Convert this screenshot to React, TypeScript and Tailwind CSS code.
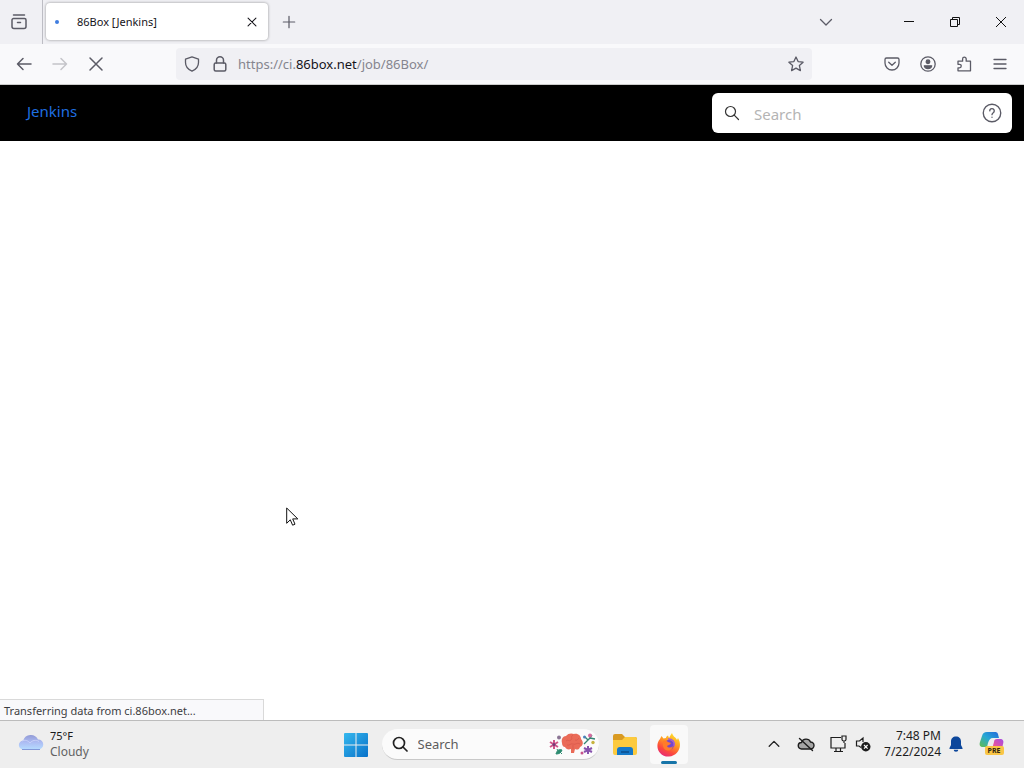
import React, { useState } from 'react';

interface IconButtonProps {
    label: string;
    className?: string;
    disabled?: boolean;
    children: React.ReactNode;
}

const IconButton: React.FC<IconButtonProps> = ({ label, className = 'w-9 h-8', disabled, children }) => (
    <button
        type="button"
        aria-label={label}
        disabled={disabled}
        className={`flex shrink-0 items-center justify-center text-[#5b5b66] disabled:text-[#c4c4c9] ${className}`}
    >
        {children}
    </button>
);

interface IconProps {
    size?: number;
    width?: number;
    className?: string;
    children: React.ReactNode;
}

// Stroke icons on a 16 unit grid
const Icon: React.FC<IconProps> = ({ size = 16, width = 1.3, className = '', children }) => (
    <svg
        width={size}
        height={size}
        viewBox="0 0 16 16"
        fill="none"
        stroke="currentColor"
        strokeWidth={width}
        strokeLinecap="round"
        strokeLinejoin="round"
        className={`shrink-0 ${className}`}
        aria-hidden="true"
    >
        {children}
    </svg>
);

const TabStrip: React.FC = () => (
    <header className="flex h-11 shrink-0 items-stretch bg-[#f0f0f4]">
        <IconButton label="Firefox View" className="w-[43px] border-r border-[#bdbdc4] pr-1">
            <Icon width={1.5}>
                <path d="M2.500 1h11" />
                <path d="M2.500 4.500h11a1.500 1.500 0 0 1 1.500 1.500v6.500a2 2 0 0 1-2 2H3a2 2 0 0 1-2-2V6a1.500 1.500 0 0 1 1.500-1.500z" />
                <path d="M6.500 8.500h3" />
            </Icon>
        </IconButton>

        <div className="mt-[3px] mb-1 ml-[3px] flex w-[222px] items-center rounded bg-white px-2 shadow-[0_0_3px_rgba(0,0,0,0.4)]">
            <span className="ml-px h-1 w-1 rounded-full bg-[#3f7de0]"></span>
            <span className="ml-[18px] flex-1 pt-px text-[11px] text-[#15141a]">86Box [Jenkins]</span>
            <IconButton label="Close tab" className="h-4 w-4 text-[#15141a]">
                <Icon size={14} width={1.2}><path d="M3.500 3.500l9 9M12.500 3.500l-9 9" /></Icon>
            </IconButton>
        </div>

        <IconButton label="New tab" className="w-[42px]">
            <Icon size={14} width={1.4}><path d="M8 1.500v13M1.500 8h13" /></Icon>
        </IconButton>

        <div className="flex-1"></div>

        <IconButton label="List all tabs" className="mr-10 w-10">
            <Icon><path d="M2.500 5.500L8 11l5.500-5.500" /></Icon>
        </IconButton>
        <IconButton label="Minimize" className="w-[46px]">
            <svg width="10" height="10" viewBox="0 0 10 10" stroke="#111" aria-hidden="true"><path d="M0 4.500h10" /></svg>
        </IconButton>
        <IconButton label="Restore" className="w-[46px]">
            <svg width="10" height="10" viewBox="0 0 10 10" fill="none" stroke="#111" aria-hidden="true">
                <path d="M.500 2.500h7v7h-7zM2.500 2.500v-2h7v7h-2" />
            </svg>
        </IconButton>
        <IconButton label="Close" className="w-[46px]">
            <svg width="12" height="12" viewBox="0 0 12 12" stroke="#111" aria-hidden="true"><path d="M1 1l10 10M11 1L1 11" /></svg>
        </IconButton>
    </header>
);

const AddressBar: React.FC = () => {
    const [editing, setEditing] = useState(false);
    const [url, setUrl] = useState('https://ci.86box.net/job/86Box/');

    return (
        <div className="mx-[62px] flex h-8 flex-1 items-center rounded bg-[#f0f0f4] text-[#5b5b66]">
            <Icon className="ml-2">
                <path d="M8 .800l6.500 2.300v3.400c0 4-2.500 7-6.500 8.700C4 13.500 1.500 10.500 1.500 6.500V3.100z" />
            </Icon>
            <Icon className="ml-3" width={1.5}>
                <rect x="2.200" y="7" width="11.600" height="8" rx="1.500" />
                <path d="M4.500 7V4.300a3.500 3.500 0 0 1 7 0V7" />
            </Icon>
            <div className="ml-[10px] grid flex-1 items-center pt-[2px] text-[13px]">
                {!editing && (
                    <span className="col-start-1 row-start-1 whitespace-nowrap text-[#85858e]">
                        https://ci.<span className="text-[#15141a]">86box.net</span>/job/86Box/
                    </span>
                )}
                <input
                    type="text"
                    aria-label="Address"
                    value={editing ? url : ''}
                    onFocus={() => setEditing(true)}
                    onBlur={() => setEditing(false)}
                    onChange={(e) => setUrl(e.target.value)}
                    className="col-start-1 row-start-1 w-full bg-transparent text-[#15141a] outline-none"
                />
            </div>
            <IconButton label="Bookmark this page" className="h-8 w-8">
                <Icon>
                    <path d="M8 1l2.100 4.600 5 .600-3.700 3.400 1 5L8 12.100l-4.400 2.500 1-5L.900 6.200l5-.600z" />
                </Icon>
            </IconButton>
        </div>
    );
};

const Toolbar: React.FC = () => (
    <nav className="flex h-[41px] shrink-0 items-center border-b border-[#ccc] bg-[#f9f9fb] px-[6px]">
        <IconButton label="Back"><Icon width={1.500}><path d="M15 8H1.500M7 2.500L1.500 8 7 13.500" /></Icon></IconButton>
        <IconButton label="Forward" disabled><Icon width={1.500}><path d="M1 8h13.500M9 2.500L14.500 8 9 13.500" /></Icon></IconButton>
        <IconButton label="Stop"><Icon width={1.500}><path d="M2 2l12 12M14 2L2 14" /></Icon></IconButton>
        <AddressBar />
        <IconButton label="Save to Pocket">
            <Icon>
                <path d="M2.500 2h11a1.500 1.500 0 0 1 1.500 1.500V7A7 7 0 0 1 1 7V3.500A1.500 1.500 0 0 1 2.500 2z" />
                <path d="M4.700 6.200L8 9.300l3.300-3.100" />
            </Icon>
        </IconButton>
        <IconButton label="Account">
            <Icon>
                <circle cx="8" cy="8" r="7.200" />
                <circle cx="8" cy="5.800" r="1.800" fill="currentColor" />
                <path d="M4.300 9.800h7.400c-.500 1.800-1.900 2.700-3.700 2.700s-3.200-.900-3.700-2.700z" fill="currentColor" />
            </Icon>
        </IconButton>
        <IconButton label="Extensions">
            <Icon>
                <path d="M2 5.200h4.600V3a1.800 1.800 0 0 1 3.600 0v2.200h4.300v9.600H2v-3h1.500a1.700 1.700 0 0 0 0-3.500H2z" />
            </Icon>
        </IconButton>
        <IconButton label="Open menu"><Icon><path d="M2 3.500h12M2 8h12M2 12.500h12" /></Icon></IconButton>
    </nav>
);

const JenkinsHeader: React.FC = () => (
    <div className="flex h-14 shrink-0 items-center justify-between bg-black pr-3 pl-[27px]">
        <a href="#jenkins" className="pb-1 text-[15px] text-[#1f6fe0]">Jenkins</a>
        <label className="flex h-10 w-[300px] items-center rounded-md bg-white px-3">
            <Icon className="text-[#333]" width={1.200}>
                <circle cx="6.500" cy="6.500" r="5" />
                <path d="M10.200 10.200l4.300 4.300" />
            </Icon>
            <input
                type="search"
                aria-label="Search Jenkins"
                placeholder="Search"
                className="ml-[14px] w-0 flex-1 bg-transparent pt-[2px] text-[15px] text-[#333] outline-none placeholder:text-[#b4b4b4]"
            />
            <IconButton label="Search help" className="h-4 w-4">
                <Icon size={20} width={1.100}>
                    <circle cx="8" cy="8" r="7" />
                    <path d="M6.200 6.300a1.800 1.800 0 1 1 2.800 1.500c-.700.500-1 .800-1 1.500M8 11.300v.100" />
                </Icon>
            </IconButton>
        </label>
    </div>
);

const MouseCursor: React.FC = () => (
    <svg width="13" height="20" viewBox="0 0 13 20" aria-hidden="true">
        <path d="M.700 1v15.300l3.600-3.500 2.300 5.400 2.400-1-2.300-5.300h5.100z" fill="#fff" stroke="#111" strokeWidth="1" />
    </svg>
);

const WeatherIcon: React.FC = () => (
    <svg width="26" height="18" viewBox="0 0 26 18" className="mb-1" aria-hidden="true">
        <defs>
            <linearGradient id="cloud" x1="0" y1="0" x2="0" y2="1">
                <stop offset="0" stopColor="#929bd6" />
                <stop offset="0.500" stopColor="#adbcf3" />
                <stop offset="1" stopColor="#b5dcff" />
            </linearGradient>
        </defs>
        <path d="M5.500 16.500a4.500 4.500 0 0 1-.300-9A8 8 0 0 1 20 6.500a5 5 0 0 1 .500 10z" fill="url(#cloud)" />
        <path d="M4 8c3-1.500 6-.500 8 2 2-2.700 6-3.500 9-1.500" fill="none" stroke="#c9d1fa" strokeWidth="1" />
        <path d="M4 16.500h18" stroke="#8298d8" />
    </svg>
);

const StartIcon: React.FC = () => (
    <svg width="24" height="24" viewBox="0 0 24 24" aria-hidden="true">
        <defs>
            <linearGradient id="win" x1="0" y1="0" x2="1" y2="1">
                <stop offset="0" stopColor="#35b8ee" />
                <stop offset="1" stopColor="#0871c9" />
            </linearGradient>
        </defs>
        <path d="M0 1q0-1 1-1h10.500v11.500H0zM12.500 0H23q1 0 1 1v10.500H12.500zM0 12.500h11.500V24H1q-1 0-1-1zM12.500 12.500H24V23q0 1-1 1H12.500z" fill="url(#win)" />
    </svg>
);

// Brain with flowers shown inside the taskbar search box
const SearchHighlight: React.FC = () => (
    <svg width="48" height="26" viewBox="0 0 48 26" aria-hidden="true">
        <path d="M13 12c-1-4 1-7 4-7 2-3 6-3 8-2 4-1 7 2 7 5 3 3 2 7-1 8-1 3-3 3-5 2l-1 4h-3v-4c-3 1-5 0-6-2-2 0-3-2-3-4z" fill="#ea6b58" />
        <path d="M17 10c2-2 3 1 5-1s-1-3 2-5M18 14c3 1 3-2 6-1s4-2 7 0M26 9c2 1 3-1 4-2M24 14v4" fill="none" stroke="#d9574a" strokeWidth=".700" />
        <path d="M5 9v9M1 11l8 5M9 11l-8 5" stroke="#cf5588" strokeWidth="2" />
        <circle cx="5" cy="13.500" r="1.500" fill="#713b79" />
        <circle cx="10" cy="6.500" r="2" fill="#8b7594" />
        <path d="M7 23c1-4 3-5 6-4-1 3-3 4-6 4zM9 20l-1-2M13 23l-2-2" fill="#2c8b70" stroke="#2c8b70" />
        <path d="M35 13l5-5 3-4M39 9l-3-3M41 7l5 1" fill="none" stroke="#348473" strokeWidth="1.300" />
        <circle cx="41" cy="4.500" r="2" fill="#d66b9f" />
        <circle cx="35.500" cy="6" r="1.500" fill="#4b82b9" />
        <circle cx="44" cy="11.500" r="1.700" fill="#c7b33e" />
        <path d="M39 15v8M35 17l8 4M43 17l-8 4" stroke="#8652ad" strokeWidth="2" />
        <circle cx="33" cy="22" r="1.500" fill="#c7528a" />
    </svg>
);

const FolderIcon: React.FC = () => (
    <svg width="26" height="24" viewBox="0 0 26 24" aria-hidden="true">
        <path d="M1 3q0-2 2-2h7l3 3h10q2 0 2 2v14H1z" fill="#d99a22" />
        <path d="M1 7h9l3-3h10q2 0 2 2v14q0 2-2 2H3q-2 0-2-2z" fill="#fcca3e" />
        <path d="M5 22v-5q0-3 3-3h10q3 0 3 3v5z" fill="#1478c9" />
        <path d="M9 19h8" stroke="#0d579b" strokeWidth="2" />
    </svg>
);

const FirefoxIcon: React.FC = () => (
    <svg width="24" height="24" viewBox="0 0 24 24" aria-hidden="true">
        <defs>
            <linearGradient id="fox" x1="0.800" y1="0" x2="0.300" y2="1">
                <stop offset="0" stopColor="#ffe92f" />
                <stop offset="0.400" stopColor="#ff9d22" />
                <stop offset="0.750" stopColor="#fc493e" />
                <stop offset="1" stopColor="#e62a75" />
            </linearGradient>
        </defs>
        <path d="M3 6l1.500-3 2 2.500L9 5c0-1.500 1-2 2-2.500l1 2.500c1-2 2-3.500 3-5 1 4 4 4 5 7l1-2c5 8 0 18-9 18.500C2 24-3 13 3 6z" fill="url(#fox)" />
        <circle cx="12" cy="12" r="5" fill="#7546cf" />
        <path d="M6 8c2-1 4 0 5 1l3 1c-1 2-3 2-4 3 1 2 4 2 6 0-1 6-9 6-10 0z" fill="#ff7c29" />
        <path d="M11 6c5 0 7 3 6 7" fill="none" stroke="#a05cda" strokeWidth="1.500" />
    </svg>
);

const CopilotIcon: React.FC = () => (
    <svg width="26" height="26" viewBox="0 0 26 26" aria-hidden="true">
        <defs>
            <linearGradient id="copA" x1="0" y1="1" x2="1" y2="0">
                <stop offset="0" stopColor="#63bd4b" />
                <stop offset="0.500" stopColor="#26a8d5" />
                <stop offset="1" stopColor="#2467d9" />
            </linearGradient>
            <linearGradient id="copB" x1="1" y1="0" x2="0" y2="1">
                <stop offset="0" stopColor="#a34be5" />
                <stop offset="0.500" stopColor="#e9559b" />
                <stop offset="1" stopColor="#fb9b4d" />
            </linearGradient>
        </defs>
        <path d="M8 1h8c3 0 3 2 4 6h-6c-3 0-4 2-5 5l-1 4H4c-3 0-4-2-3-5l2-6c1-3 2-4 5-4z" fill="url(#copA)" />
        <path d="M18 8h3c3 0 4 2 3 5l-1 5c-1 4-3 5-5 5H8c3 0 4-2 5-5l2-7c0-2 1-3 3-3z" fill="url(#copB)" />
        <rect x="6" y="15" width="19" height="9" rx="2" fill="#f9c646" />
        <text x="15" y="22" textAnchor="middle" fontSize="7" fontWeight="700" fill="#2d2410">PRE</text>
    </svg>
);

const Taskbar: React.FC = () => (
    <footer className="grid h-12 shrink-0 grid-cols-[1fr_auto_1fr] items-stretch border-t border-[#bcbcbc] bg-[#eee]">
        <button type="button" className="flex items-center gap-[6px] justify-self-start pb-px pl-[18px] text-left text-[11px] leading-4">
            <WeatherIcon />
            <span>
                <span className="block text-[#1a1a1a]">75°F</span>
                <span className="block text-xs leading-4 text-[#626262]">Cloudy</span>
            </span>
        </button>

        <div className="flex items-center">
            <IconButton label="Start" className="h-10 w-11"><StartIcon /></IconButton>
            <label className="mx-1 flex h-[31px] w-[217px] items-center rounded-full border-b border-[#c9c9c9] bg-[#fbfbfb] pr-[2px] pl-[10px]">
                <Icon className="text-[#222]" width={1.700}>
                    <circle cx="7" cy="7" r="5.500" />
                    <path d="M11 11l4 4" />
                </Icon>
                <input
                    type="search"
                    aria-label="Search Windows"
                    placeholder="Search"
                    className="ml-[10px] w-0 flex-1 bg-transparent pt-px text-[13px] outline-none placeholder:text-[#5d5d5d]"
                />
                <SearchHighlight />
            </label>
            <IconButton label="File Explorer" className="h-10 w-11"><FolderIcon /></IconButton>
            <button
                type="button"
                aria-label="Firefox"
                className="mx-[3px] flex h-[39px] w-[38px] flex-col items-center justify-end rounded bg-[#f9f9f9]"
            >
                <FirefoxIcon />
                <span className="mt-1 h-[3px] w-4 rounded-full bg-[#1674a8]"></span>
            </button>
        </div>

        <div className="flex items-center justify-self-end pr-[19px] pb-px">
            <IconButton label="Show hidden icons" className="h-8 w-8 text-[#222]">
                <Icon size={14} width={1.500}><path d="M2.500 10.500L8 5l5.500 5.500" /></Icon>
            </IconButton>
            <IconButton label="OneDrive" className="h-8 w-8">
                <svg width="18" height="16" viewBox="0 0 18 16" fill="none" stroke="#1d1d1d" strokeWidth="1.400" strokeLinecap="round" aria-hidden="true">
                    <path d="M4.500 13a3.200 3.200 0 0 1 0-6.500 4.800 4.800 0 0 1 9-.500 3.500 3.500 0 0 1 0 7z" fill="#a5a5a5" />
                    <path d="M2.500 2.500l13 12" />
                </svg>
            </IconButton>
            <IconButton label="Network" className="h-8 w-8">
                <svg width="17" height="18" viewBox="0 0 17 18" fill="none" stroke="#1d1d1d" strokeWidth="1.200" aria-hidden="true">
                    <path d="M11 2.500H1v10.500h14V8M6 13v3.500M10.500 13v3.500M4 16.500h9" />
                    <path d="M12 1h4v3.500q0 1.500-2 1.500t-2-1.500zM14 6v2" />
                </svg>
            </IconButton>
            <IconButton label="Volume muted" className="h-8 w-[18px]">
                <svg width="16" height="16" viewBox="0 0 16 16" fill="none" stroke="#1d1d1d" strokeWidth="1.200" aria-hidden="true">
                    <path d="M8 6V2L4.500 5H1.500v5H4l2 1.500" />
                    <circle cx="10.800" cy="10.800" r="4.700" fill="#1d1d1d" stroke="none" />
                    <path d="M9 9l3.600 3.600M12.600 9L9 12.600" stroke="#fff" />
                </svg>
            </IconButton>
            <button type="button" className="ml-3 flex items-center gap-2 text-right text-xs leading-4 text-[#1d1d1d]">
                <span>
                    <span className="block">7:48 PM</span>
                    <span className="block">7/22/2024</span>
                </span>
                <svg width="14" height="16" viewBox="0 0 14 16" fill="#0d479b" aria-hidden="true">
                    <path d="M7 .500c3 0 5 2 5 5V9l1.500 3v1H.500v-1L2 9V5.500c0-3 2-5 5-5zM4.700 13.700h4.600a2.300 2 0 0 1-4.600 0z" />
                </svg>
            </button>
            <IconButton label="Copilot preview" className="ml-4 h-8 w-[26px]"><CopilotIcon /></IconButton>
        </div>
    </footer>
);

const App: React.FC = () => {
    return (
        <div className="flex h-screen flex-col overflow-hidden bg-white font-['Noto_Sans','Open_Sans',sans-serif]">
            <TabStrip />
            <Toolbar />
            <JenkinsHeader />
            <main className="flex flex-1 flex-col justify-end">
                <div className="h-[21px] w-[264px] border-t border-r border-[#d9d9d9] bg-[#f9f9fb] pl-1 text-[11px] leading-[22px] text-[#3d3d42]">
                    Transferring data from ci.86box.net...
                </div>
            </main>
            <Taskbar />
            <div className="pointer-events-none absolute top-[507px] left-[286px]">
                <MouseCursor />
            </div>
        </div>
    );
};

export default App;
